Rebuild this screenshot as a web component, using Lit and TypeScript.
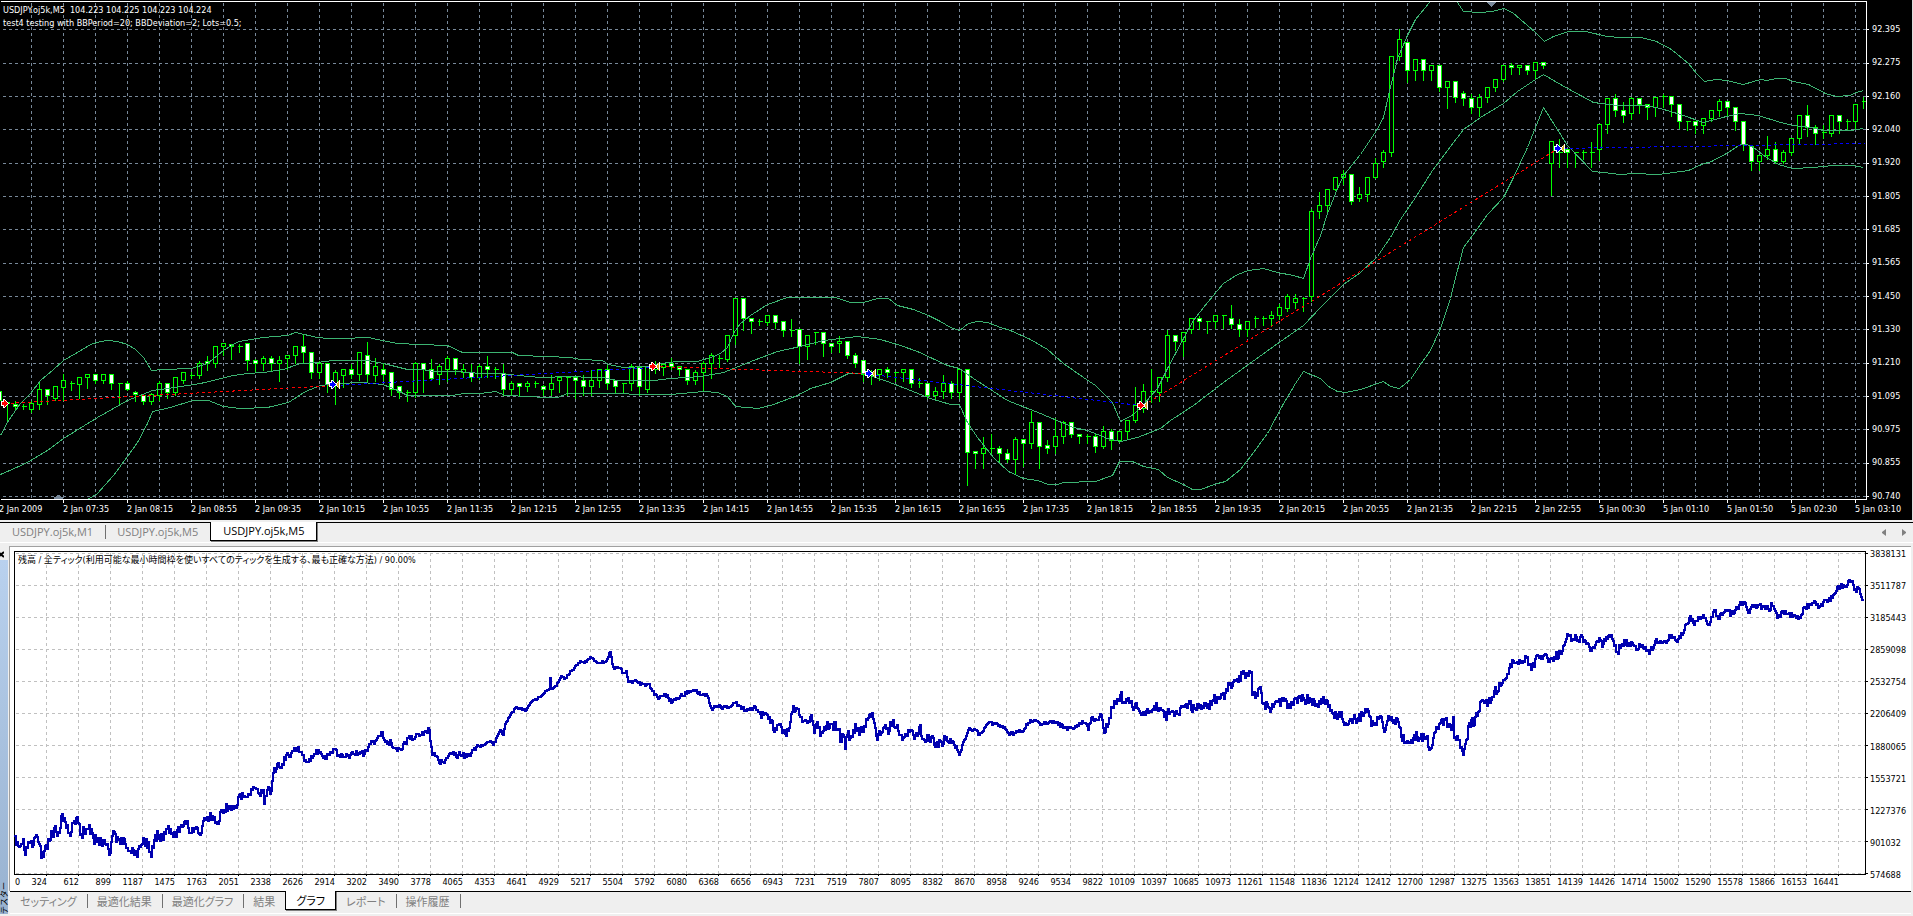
import { LitElement, html, svg, css } from "lit";
import { customElement, property } from "lit/decorators.js";

const PRICES = ["92.395", "92.275", "92.160", "92.040", "91.920", "91.805", "91.685", "91.565", "91.450", "91.330", "91.210", "91.095", "90.975", "90.855", "90.740"];
const PRICE_ROWS = [29, 63, 96, 129, 163, 196, 229, 263, 296, 329, 363, 396, 429, 463, 496];

const TIMES = [
  "2 Jan 2009", "2 Jan 07:35", "2 Jan 08:15", "2 Jan 08:55", "2 Jan 09:35", "2 Jan 10:15", "2 Jan 10:55", "2 Jan 11:35",
  "2 Jan 12:15", "2 Jan 12:55", "2 Jan 13:35", "2 Jan 14:15", "2 Jan 14:55", "2 Jan 15:35", "2 Jan 16:15", "2 Jan 16:55",
  "2 Jan 17:35", "2 Jan 18:15", "2 Jan 18:55", "2 Jan 19:35", "2 Jan 20:15", "2 Jan 20:55", "2 Jan 21:35", "2 Jan 22:15",
  "2 Jan 22:55", "5 Jan 00:30", "5 Jan 01:10", "5 Jan 01:50", "5 Jan 02:30", "5 Jan 03:10",
];

// One candle every 8 units: high, body top, body bottom, low; a trailing "f" marks a falling bar.
const CANDLES = `402 402 403 422|400 404 406 409f|403 406 406 409|400 403 409 412|380 389 404 409|389 389 395 404f|386 386 398 400|373 380 387 400|380 383 383 390|377 377 384 398|374 374 377 388|373 374 380 383f|374 374 380 383|374 374 383 389f|383 383 383 404|380 383 389 390f|390 392 394 401f|394 395 401 404f|392 394 401 404|380 383 395 400|383 383 392 398f|377 377 392 395|372 372 380 383|371 375 375 378|360 363 375 378|355 361 363 370f|346 346 363 367|343 343 346 355|343 344 346 359f|343 346 346 352|343 343 360 370f|358 360 363 372f|355 358 363 370|355 358 363 370f|355 360 363 381|355 355 358 369|346 346 355 363|334 346 352 363f|352 352 372 378f|360 363 372 378|363 363 384 392f|369 372 385 404|369 369 375 387|363 369 374 378f|352 352 374 380|341 355 374 381f|357 366 375 381|363 369 374 380f|372 372 389 395f|386 386 392 398f|389 392 392 401|361 363 392 397|363 363 369 392f|358 369 378 380f|363 366 374 384|355 358 369 381|358 358 369 374f|363 369 372 377|363 372 377 381f|363 366 377 379|355 366 369 377f|366 369 369 378|363 373 389 395f|380 383 389 395|383 383 386 395f|380 383 386 391|380 383 383 387|384 386 389 395f|374 383 389 395|377 377 380 392|377 377 377 395|377 377 380 398f|374 380 386 395f|369 380 386 395|369 369 380 387|364 369 383 389f|380 380 386 392f|383 383 383 392|363 366 383 390|366 367 386 395f|366 367 389 392|360 365 369 373|363 364 367 375|357 363 366 369f|366 366 369 375f|369 369 380 384f|369 372 380 384|360 363 372 390|352 355 363 378|354 358 358 367|335 335 359 361|298 298 335 344|298 298 318 330f|317 318 321 333f|318 321 321 325|315 315 322 325|315 315 322 328f|321 321 330 336f|318 330 330 336|329 329 346 363f|335 335 346 359|332 332 332 344|332 332 343 356f|343 343 346 352f|335 341 343 352|341 341 355 358f|352 355 363 367f|360 360 374 381f|369 372 375 384|369 369 374 380|366 369 372 377f|372 372 372 381|369 369 372 381|369 369 383 387f|377 383 383 387|383 383 395 398f|386 391 395 398|374 383 391 398|380 383 392 398f|369 369 392 398|369 369 452 485f|451 451 453 468f|436 448 453 468|433 448 448 453|445 448 453 462f|448 453 459 462f|436 439 459 474|439 439 443 466f|410 422 443 448|422 422 446 468f|439 445 448 453f|417 436 446 453|420 422 436 443|422 422 434 437f|434 434 436 443f|433 436 436 443|433 436 446 452f|425 431 446 448|428 431 440 449f|431 431 440 442|420 420 431 439|386 405 420 422|383 391 408 412|368 391 391 402|377 377 392 401|329 335 377 381|335 335 341 350f|332 332 341 356|318 318 329 333|315 318 321 329f|321 321 321 333|315 315 321 328|315 315 315 328|304 318 324 328f|318 324 329 336f|321 321 329 336|315 318 318 327|315 318 318 325|310 315 318 325|303 307 315 319|293 296 308 311|293 298 302 308|296 298 298 311|208 211 296 301|191 205 211 218|189 189 205 212|177 177 189 190|169 174 177 184|174 174 201 204f|186 194 198 201|177 177 194 201|157 163 177 178|149 152 161 167|56 56 152 156|28 39 56 60|42 42 70 82f|59 59 70 80|59 59 70 80f|65 65 70 80|65 65 87 91f|81 81 87 108|81 81 97 102f|90 93 98 105f|93 98 107 113f|93 97 107 116|87 87 97 102|79 79 87 91|65 65 79 81|62 65 67 74f|65 65 67 74|65 65 70 74f|61 62 70 78|62 62 65 68f|141 141 163 195|138 152 152 167|149 149 152 167f|152 152 152 167|149 152 152 159|141 152 152 167|124 124 149 160|98 98 124 133|93 98 110 116f|101 110 115 122f|96 98 113 119|98 98 104 113f|104 104 107 119f|97 97 107 116|93 96 96 107|96 96 104 116f|104 104 121 128f|121 121 121 130|121 121 125 133f|118 118 125 133|110 110 118 121|98 101 110 116|101 101 107 116f|107 107 121 130f|121 121 144 150f|146 146 161 170f|155 155 161 170|135 149 155 159|141 149 161 163f|149 152 161 163|138 138 152 155|115 115 138 144|104 115 127 136f|124 127 133 144f|124 132 132 138|115 115 133 136|115 115 121 133f|118 121 121 129|104 104 121 128|96 101 101 108`
  .split("|")
  .map((bar, i) => {
    const [high, top, bottom, low] = bar.replace("f", "").split(" ").map(Number);
    return { x: 7 + 8 * i, high, top, bottom, low, falling: bar.endsWith("f") };
  });

const BANDS = [
  "0,435 8,420 20,403 30,393 40,380 53,369 63,360 77,352 90,344 100,341 108,340 117,341 127,344 135,349 143,357 151,370 163,369 191,368 207,363 223,350 238,341 263,337 287,335 295,332 317,337 327,338 352,338 357,337 368,337 377,339 397,343 420,344 447,345 462,352 480,352 512,352 518,355 547,356 570,357 580,359 602,360 608,364 623,367 647,366 660,363 677,361 697,361 713,356 720,353 727,347 733,333 740,323 750,315 767,304 787,297 835,297 850,302 863,302 877,298 888,298 897,305 913,309 928,315 940,321 950,327 959,330 968,323 977,321 987,322 1000,327 1010,330 1030,339 1047,349 1063,363 1083,377 1095,385 1112,402 1120,421 1133,414 1143,404 1157,388 1167,368 1183,338 1193,320 1203,307 1217,290 1223,283 1237,274 1248,270 1263,268 1277,272 1293,275 1303,278 1310,258 1320,235 1327,213 1335,193 1343,175 1360,154 1376,130 1383,117 1388,95 1397,58 1407,35 1415,19 1429,2",
  "1457,2 1463,11 1480,12 1492,11 1503,8 1512,12 1535,32 1544,41 1553,36 1568,31 1585,31 1607,36 1620,37 1641,37 1656,41 1671,49 1688,63 1696,73 1704,81 1716,79 1726,80 1743,84 1760,79 1766,80 1776,78 1785,78 1793,81 1808,84 1825,93 1836,96 1849,95 1856,92 1863,90",
  "0,474 25,463 47,450 63,438 97,417 127,400 152,390 167,388 200,383 233,375 247,373 263,372 283,369 300,363 317,362 333,360 368,360 383,363 407,369 422,369 433,371 457,371 480,373 500,373 518,375 540,377 570,376 590,377 602,377 617,380 653,380 670,378 700,376 723,372 753,360 777,351 800,346 823,340 857,336 880,339 900,345 917,351 947,365 959,368 973,378 990,389 1007,400 1040,413 1073,427 1087,430 1107,438 1120,441 1137,437 1160,428 1170,420 1193,405 1223,382 1273,346 1303,325 1320,307 1343,284 1360,272 1377,256 1383,247 1390,237 1400,219 1415,197 1432,170 1447,150 1463,129 1480,117 1503,103 1517,91 1535,79 1543,74 1560,84 1580,95 1593,102 1617,105 1645,105 1660,108 1680,114 1703,122 1726,116 1740,113 1758,115 1780,122 1793,125 1811,127 1823,130 1850,130 1863,128",
  "87,499 97,493 113,475 127,456 137,442 147,423 152,411 170,407 192,400 208,400 223,406 240,408 267,407 288,402 305,391 320,385 337,383 363,382 382,384 395,389 407,395 452,395 463,393 480,393 495,391 505,395 530,396 543,397 557,397 567,393 623,393 633,394 670,394 703,391 717,392 727,396 735,406 758,408 773,404 797,395 810,388 830,382 848,373 863,373 887,381 910,390 930,398 950,404 959,404 967,422 977,437 993,457 1008,471 1023,478 1037,480 1048,484 1057,484 1063,482 1095,481 1112,475 1119,461 1132,461 1143,466 1158,469 1167,477 1183,484 1192,489 1200,489 1217,483 1225,481 1240,469 1253,452 1267,433 1282,405 1295,383 1303,371 1320,378 1328,386 1337,391 1345,392 1360,389 1383,381 1390,386 1399,388 1410,379 1420,364 1430,350 1440,328 1450,298 1457,270 1463,247 1472,235 1487,214 1503,197 1513,177 1527,147 1535,127 1543,107 1567,145 1592,171 1603,172 1620,174 1633,173 1658,174 1688,170 1701,164 1711,161 1726,153 1740,144 1746,144 1753,147 1766,157 1778,164 1792,168 1813,167 1833,165 1851,165 1863,167",
];

const TRADES = [
  { from: [4, 403], to: [334, 385], side: "sell" },
  { from: [334, 385], to: [653, 367], side: "buy" },
  { from: [654, 366], to: [868, 373], side: "sell" },
  { from: [870, 374], to: [1140, 405], side: "buy" },
  { from: [1143, 405], to: [1556, 149], side: "sell" },
  { from: [1558, 148], to: [1865, 143], side: "buy" },
];

const COUNTS = [
  324, 612, 899, 1187, 1475, 1763, 2051, 2338, 2626, 2914, 3202, 3490, 3778, 4065, 4353, 4641, 4929, 5217, 5504, 5792,
  6080, 6368, 6656, 6943, 7231, 7519, 7807, 8095, 8382, 8670, 8958, 9246, 9534, 9822, 10109, 10397, 10685, 10973, 11261,
  11548, 11836, 12124, 12412, 12700, 12987, 13275, 13563, 13851, 14139, 14426, 14714, 15002, 15290, 15578, 15866, 16153, 16441,
];
const BALANCES = [3838131, 3511787, 3185443, 2859098, 2532754, 2206409, 1880065, 1553721, 1227376, 901032, 574688];

const EQUITY = "14,835 17,842 23,839 25,855 29,842 33,845 37,837 40,846 41,858 43,857 46,845 50,840 54,828 58,832 62,814 65,822 69,833 74,821 78,823 81,834 88,829 93,838 98,842 104,840 109,855 112,836 118,840 124,839 128,851 133,850 137,857 141,845 148,842 151,857 154,840 158,835 163,840 167,829 175,835 181,825 187,821 190,833 195,829 201,833 204,818 212,816 217,824 222,810 229,806 236,808 239,795 246,797 252,790 258,793 263,790 264,804 267,790 271,791 273,773 278,763 281,768 286,755 290,757 294,748 301,752 306,762 310,761 316,750 321,754 325,759 330,752 335,749 338,755 345,757 350,755 360,752 364,754 370,744 376,740 381,732 384,740 391,743 397,751 401,750 408,738 415,737 421,735 429,730 432,755 436,756 439,763 445,760 452,754 460,755 468,756 476,747 484,745 490,741 493,745 500,730 503,735 505,724 509,717 515,708 521,708 525,711 531,702 540,697 547,690 549,689 550,678 551,689 556,686 561,676 564,679 572,670 580,661 584,663 590,657 597,663 605,662 610,652 613,667 619,668 622,673 626,671 628,682 633,681 642,684 649,684 652,691 658,699 664,694 672,702 680,696 688,693 695,691 702,695 707,696 711,708 718,707 728,708 735,703 740,706 745,710 755,707 760,714 764,713 770,723 776,730 781,727 785,734 789,728 792,712 797,709 800,717 806,721 811,715 814,733 817,722 820,736 826,726 832,724 838,729 841,742 843,735 845,749 847,735 852,737 855,724 859,735 864,726 869,715 872,713 876,736 884,727 888,734 891,722 896,728 903,738 911,730 915,736 919,727 924,740 931,737 934,745 940,741 945,740 948,742 955,748 959,755 964,740 968,730 975,730 979,735 984,728 988,723 995,724 1003,728 1010,734 1023,731 1028,723 1034,720 1040,725 1053,721 1056,722 1063,728 1073,729 1079,723 1085,723 1088,730 1091,718 1096,720 1101,715 1103,728 1107,727 1112,708 1117,699 1120,695 1124,702 1128,698 1132,707 1136,703 1141,715 1148,713 1154,706 1160,708 1164,717 1170,712 1178,714 1181,706 1188,704 1194,709 1200,705 1207,708 1212,701 1220,698 1225,693 1228,683 1231,688 1236,681 1244,673 1251,672 1252,695 1256,693 1259,688 1263,704 1269,708 1277,702 1284,701 1289,706 1296,699 1303,698 1310,702 1317,706 1323,697 1326,700 1330,711 1334,718 1339,712 1344,725 1350,719 1358,718 1366,712 1373,725 1378,719 1382,722 1385,730 1388,716 1393,723 1398,722 1401,737 1410,742 1414,735 1420,738 1426,738 1430,749 1433,738 1437,729 1444,720 1451,730 1453,717 1454,738 1457,736 1460,748 1463,755 1466,740 1468,726 1472,718 1474,725 1478,712 1482,700 1487,706 1491,700 1495,687 1497,692 1504,680 1509,668 1513,661 1520,663 1526,658 1531,670 1538,656 1547,658 1552,658 1560,653 1564,645 1567,634 1571,641 1576,637 1584,640 1591,651 1597,641 1603,644 1608,636 1613,641 1617,652 1622,644 1632,643 1636,650 1642,645 1649,654 1655,641 1665,642 1671,635 1676,641 1682,635 1686,624 1690,616 1694,625 1698,617 1704,618 1708,625 1714,610 1718,619 1726,610 1731,614 1737,607 1744,602 1749,613 1754,605 1763,607 1770,610 1771,603 1777,618 1782,611 1787,614 1793,615 1798,619 1805,608 1812,603 1820,606 1826,600 1832,598 1837,587 1845,586 1851,581 1854,590 1858,588 1862,600 1864,598"
  .split(" ")
  .map((pair) => pair.split(",").map(Number));

const SWING = [[165, 6], [270, 4], [480, 3], [610, 1], [760, 2], [960, 5], [1100, 2], [1460, 5], [1500, 6], [1640, 4], [1870, 3]];

function equityPath(): string {
  let seed = 41;
  let d = "";
  for (let k = 1; k < EQUITY.length; k++) {
    const [x0, y0] = EQUITY[k - 1];
    const [x1, y1] = EQUITY[k];
    for (let x = x0; x < x1; x++) {
      seed = (seed * 16807) % 2147483647;
      const swing = SWING.find(([limit]) => x < limit)![1];
      const noise = (seed / 2147483647 - 0.5) * 2 * swing;
      const y = Math.round(y0 + ((y1 - y0) * (x - x0)) / (x1 - x0) + (x === x0 ? 0 : noise));
      d += d ? `V${y - 551}H${x - 13}` : `M${x - 14} ${y - 551}`;
    }
  }
  return d;
}
const EQUITY_PATH = equityPath();

@customElement("price-chart")
class PriceChart extends LitElement {
  static styles = css`
    :host {
      display: grid;
      grid-template-columns: minmax(0, 1869fr) minmax(0, 43fr);
      grid-template-rows: minmax(0, 1fr) 20px;
      position: relative;
      overflow: hidden;
      background: #000;
      color: #fff;
      border-right: 1px solid #dcdcdc;
      font-family: "DejaVu Sans Condensed", "DejaVu Sans", sans-serif;
      font-size: 9px;
      line-height: 10px;
    }
    svg { display: block; width: 100%; height: 100%; grid-area: 1 / 1; shape-rendering: crispEdges; }
    .caption { position: absolute; left: 3px; top: 4px; line-height: 13px; }
    .caption p { margin: 0; white-space: pre; }
    .prices {
      grid-area: 1 / 2 / 3 / 3;
      display: flex; flex-direction: column; justify-content: space-between;
      padding: 24px 0 19px 3px;
    }
    .times { grid-area: 2 / 1 / 3 / 3; display: flex; margin-left: -1px; }
    .times span {
      flex: 64 1 0; min-width: 0; white-space: nowrap; padding-top: 4px;
      background: linear-gradient(#fff, #fff) 0 0 / 1px 3px no-repeat;
    }
    .times span:last-child { flex-grow: 57; }
    .grid { stroke: #778899; stroke-dasharray: 3 3; }
    .frame { stroke: #fff; fill: none; }
    .bar { stroke: #00ff00; fill: #000; }
    .bar.falling { fill: #fff; }
    .band { stroke: #3cb371; fill: none; }
    .trade { stroke-dasharray: 3 3; }
    .trade.sell { stroke: #f00; }
    .trade.buy { stroke: #00f; }
    .sell { fill: #f00; }
    .buy { fill: #00f; }
    .edge { fill: #fff; }
    .exit { fill: #daa520; }
    .shift { fill: #778899; }
  `;

  private marker([x, y]: number[], side: string, closes: boolean) {
    return svg`<g transform="translate(${x - 6} ${y - 5})">
      ${closes ? svg`<path class="edge" d="M11 0v9h-1v-1h-1v-1h-1v-1h-1V3h1V2h1V1h1V0z"/><path class="exit" d="M10 1v7h-1v-2h-1V3h1V1z"/>` : ""}
      <path class="edge" d="M2 0h2v1h1v1h1v1h1v1h1v1h-1v1h-1v1h-1v1h-1v1h-2v-2h-2v-5h2z"/>
      <path class=${side} d="M3 1h1v1h1v1h1v1h1v1h-1v1h-1v1h-1v1h-1V6H1V3h2z"/>
    </g>`;
  }

  render() {
    const columns = Array.from({ length: 58 }, (_, i) => 31 + 32 * i);
    return html`
      <svg viewBox="0 0 1869 500" preserveAspectRatio="none" role="img" aria-label="USDJPY.oj5k, M5">
        <g transform="translate(.5 .5)">
          ${columns.map((x) => svg`<path class="grid" d="M${x} 2V498"/>`)}
          ${PRICE_ROWS.map((y) => svg`<path class="grid" d="M2 ${y}H1865"/><path class="frame" d="M1866 ${y}h2"/>`)}
          <path class="bar falling" d="M-3 391h4v9h-4z"/>
          ${CANDLES.map((c) => svg`
            <path class="bar" d="M${c.x} ${c.high}V${c.low}"/>
            <path class=${c.falling ? "bar falling" : "bar"} d=${c.top === c.bottom ? `M${c.x - 2} ${c.top}h5` : `M${c.x - 2} ${c.top}h4V${c.bottom}h-4z`}/>`)}
          ${BANDS.map((points) => svg`<polyline class="band" points=${points}/>`)}
          ${TRADES.map((t) => svg`<path class="trade ${t.side}" d="M${t.from.join(" ")}L${t.to.join(" ")}"/>`)}
          <path class="frame" d="M0 1H1866V499H0"/>
        </g>
        ${this.marker([7, 404], "sell", false)}
        ${this.marker([335, 385], "buy", true)}
        ${this.marker([655, 367], "sell", true)}
        ${this.marker([871, 374], "buy", true)}
        ${this.marker([1143, 406], "sell", true)}
        ${this.marker([1560, 149], "buy", true)}
        <path class="shift" d="M54 499v-2h2v-1h1v-1h3v1h1v1h2v2z M1487 2h9v1h-1v1h-1v1h-1v1h-1v1h-1V6h-1V5h-1V4h-1V3h-1z"/>
      </svg>
      <div class="caption">
        <p>USDJPY.oj5k,M5  104.223 104.225 104.223 104.224</p>
        <p>test4 testing with BBPeriod=20; BBDeviation=2; Lots=0.5;</p>
      </div>
      <div class="prices">${PRICES.map((p) => html`<span>${p}</span>`)}</div>
      <div class="times">${TIMES.map((t) => html`<span>${t}</span>`)}</div>
    `;
  }
}

@customElement("equity-chart")
class EquityChart extends LitElement {
  static styles = css`
    :host {
      display: grid;
      grid-template-columns: 4px minmax(0, 1854fr) minmax(0, 43fr);
      grid-template-rows: 4px minmax(0, 1fr) 16px;
      position: relative;
      background: #fff;
      color: #000;
      border-top: 1px solid #a0a0a0;
      border-left: 1px solid #a0a0a0;
      font-family: "DejaVu Sans Condensed", "DejaVu Sans", "Noto Sans CJK JP", sans-serif;
      font-size: 9px;
      line-height: 10px;
    }
    svg { display: block; width: 100%; height: 100%; grid-area: 2 / 2; shape-rendering: crispEdges; }
    .caption {
      position: absolute; left: 8px; top: 8px; margin: 0; white-space: nowrap;
      line-height: 11px; font-feature-settings: "palt";
    }
    .balances {
      grid-area: 1 / 3 / 4 / 4;
      display: flex; flex-direction: column; justify-content: space-between;
      padding: 2px 0 11px 2px;
    }
    .counts { grid-area: 3 / 2; display: flex; padding-left: 1px; }
    .counts span {
      flex: 32 1 0; min-width: 0; display: flex; justify-content: flex-end; padding-top: 2px;
      background: linear-gradient(#000, #000) 100% 0 / 1px 1px no-repeat;
    }
    .counts .first { justify-content: space-between; }
    .counts .rest { flex-grow: 29; background: none; }
    .counts i { font-style: normal; }
    .grid { stroke: #c0c0c0; stroke-dasharray: 3 3; }
    .frame { stroke: #000; fill: none; }
    .equity { stroke: #0000b0; stroke-width: 2; fill: none; }
  `;

  render() {
    const columns = Array.from({ length: 57 }, (_, i) => 32 + 32 * i);
    const rows = Array.from({ length: 11 }, (_, i) => 2 + 32 * i);
    return html`
      <svg viewBox="0 0 1854 324" preserveAspectRatio="none" role="img" aria-label="残高">
        <g transform="translate(.5 .5)">
          ${columns.map((x) => svg`<path class="grid" d="M${x} 1V322"/>`)}
          ${rows.map((y) => svg`<path class="grid" d="M1 ${y}H1850"/><path class="frame" d="M1851 ${y}h2"/>`)}
          <path class="frame" d="M0 0H1851V323H0Z"/>
        </g>
        <path class="equity" d=${EQUITY_PATH}/>
      </svg>
      <p class="caption">残高 / 全ティック(利用可能な最小時間枠を使いすべてのティックを生成する、最も正確な方法) / 90.00%</p>
      <div class="balances">${BALANCES.map((b) => html`<span>${b}</span>`)}</div>
      <div class="counts">
        ${COUNTS.map((c, i) => (i === 0 ? html`<span class="first"><i>0</i><i>${c}</i></span>` : html`<span>${c}</span>`))}
        <span class="rest"></span>
      </div>
    `;
  }
}

@customElement("tab-strip")
class TabStrip extends LitElement {
  @property({ type: Array }) tabs: string[] = [];
  @property({ type: Number }) selected = 0;
  @property({ type: Boolean, reflect: true }) compact = false;

  static styles = css`
    :host {
      display: flex;
      border-top: 1px solid #000;
      border-bottom: 1px solid #fff;
      background: #efefef;
      font-family: "Open Sans", "Noto Sans CJK JP", sans-serif;
      font-size: 11px;
      line-height: 16px;
    }
    :host([compact]) { font-family: "Noto Sans CJK JP", sans-serif; font-feature-settings: "palt"; }
    button {
      display: flex; align-items: center; height: 18px; margin: 0; padding: 0 12px;
      border: 0; background: none; color: #808080; font: inherit; font-feature-settings: inherit;
      white-space: nowrap;
    }
    button::after { content: ""; width: 1px; height: 14px; margin-right: -13px; margin-left: 12px; background: #707070; }
    :host([compact]) button { padding: 0 10px; }
    :host([compact]) button::after { margin-right: -11px; margin-left: 10px; }
    button.before::after { visibility: hidden; }
    button.active, :host([compact]) button.active {
      margin-top: -1px; height: 19px; background: #fff; color: #000;
      border: 1px solid #000; border-top: 0; box-shadow: 1px 1px #808080;
    }
    button.active::after { display: none; }
    .spacer { flex: 1; }
    .scroll { padding: 0; width: 19px; justify-content: center; }
    .scroll::after { display: none; }
    .scroll path { fill: #808080; }
  `;

  render() {
    return html`
      ${this.tabs.map((t, i) => html`<button
        class=${i === this.selected ? "active" : i === this.selected - 1 ? "before" : ""}
        @click=${() => (this.selected = i)}>${t}</button>`)}
      <span class="spacer"></span>
      ${this.compact ? "" : html`
        <button class="scroll" aria-label="Previous"><svg width="5" height="7"><path d="M4 0v7L0 4V3z"/></svg></button>
        <button class="scroll" aria-label="Next"><svg width="5" height="7"><path d="M1 0v7l4-3V3z"/></svg></button>`}
    `;
  }
}

@customElement("app-root")
class AppRoot extends LitElement {
  static styles = css`
    :host { display: flex; flex-direction: column; height: 100vh; overflow: hidden; background: #efefef; }
    price-chart { flex: 520 1 0; min-height: 0; }
    .charts { margin-top: 2px; height: 19px; }
    .tester { flex: 368 1 0; min-height: 0; display: flex; margin-top: 3px; border-bottom: 2px solid #efefef; }
    .side { width: 9px; display: flex; flex-direction: column; }
    .close { height: 14px; padding: 0; border: 0; background: none; text-align: left; }
    .close svg { display: block; margin-left: -2px; }
    .title {
      flex: 1; width: 8px; display: flex; justify-content: center; align-items: flex-end;
      background: linear-gradient(#b9d1ee, #98b2d0);
      font: 8px/8px "Noto Sans CJK JP", sans-serif;
    }
    .title span { writing-mode: vertical-rl; text-orientation: sideways; transform: rotate(180deg); }
    .main { flex: 1; min-width: 0; display: flex; flex-direction: column; padding-right: 2px; }
    equity-chart { flex: 1; min-height: 0; }
    .views { height: 21px; margin-left: 1px; }
  `;

  render() {
    return html`
      <price-chart></price-chart>
      <tab-strip class="charts" .tabs=${["USDJPY.oj5k,M1", "USDJPY.oj5k,M5", "USDJPY.oj5k,M5"]} .selected=${2}></tab-strip>
      <div class="tester">
        <div class="side">
          <button class="close" aria-label="閉じる"><svg width="6" height="9"><path d="M0 3l6 5M0 8l6-5" stroke="#000" stroke-width="2"/></svg></button>
          <div class="title"><span>テスター</span></div>
        </div>
        <div class="main">
          <equity-chart></equity-chart>
          <tab-strip class="views" compact
            .tabs=${["セッティング", "最適化結果", "最適化グラフ", "結果", "グラフ", "レポート", "操作履歴"]} .selected=${4}></tab-strip>
        </div>
      </div>
    `;
  }
}
